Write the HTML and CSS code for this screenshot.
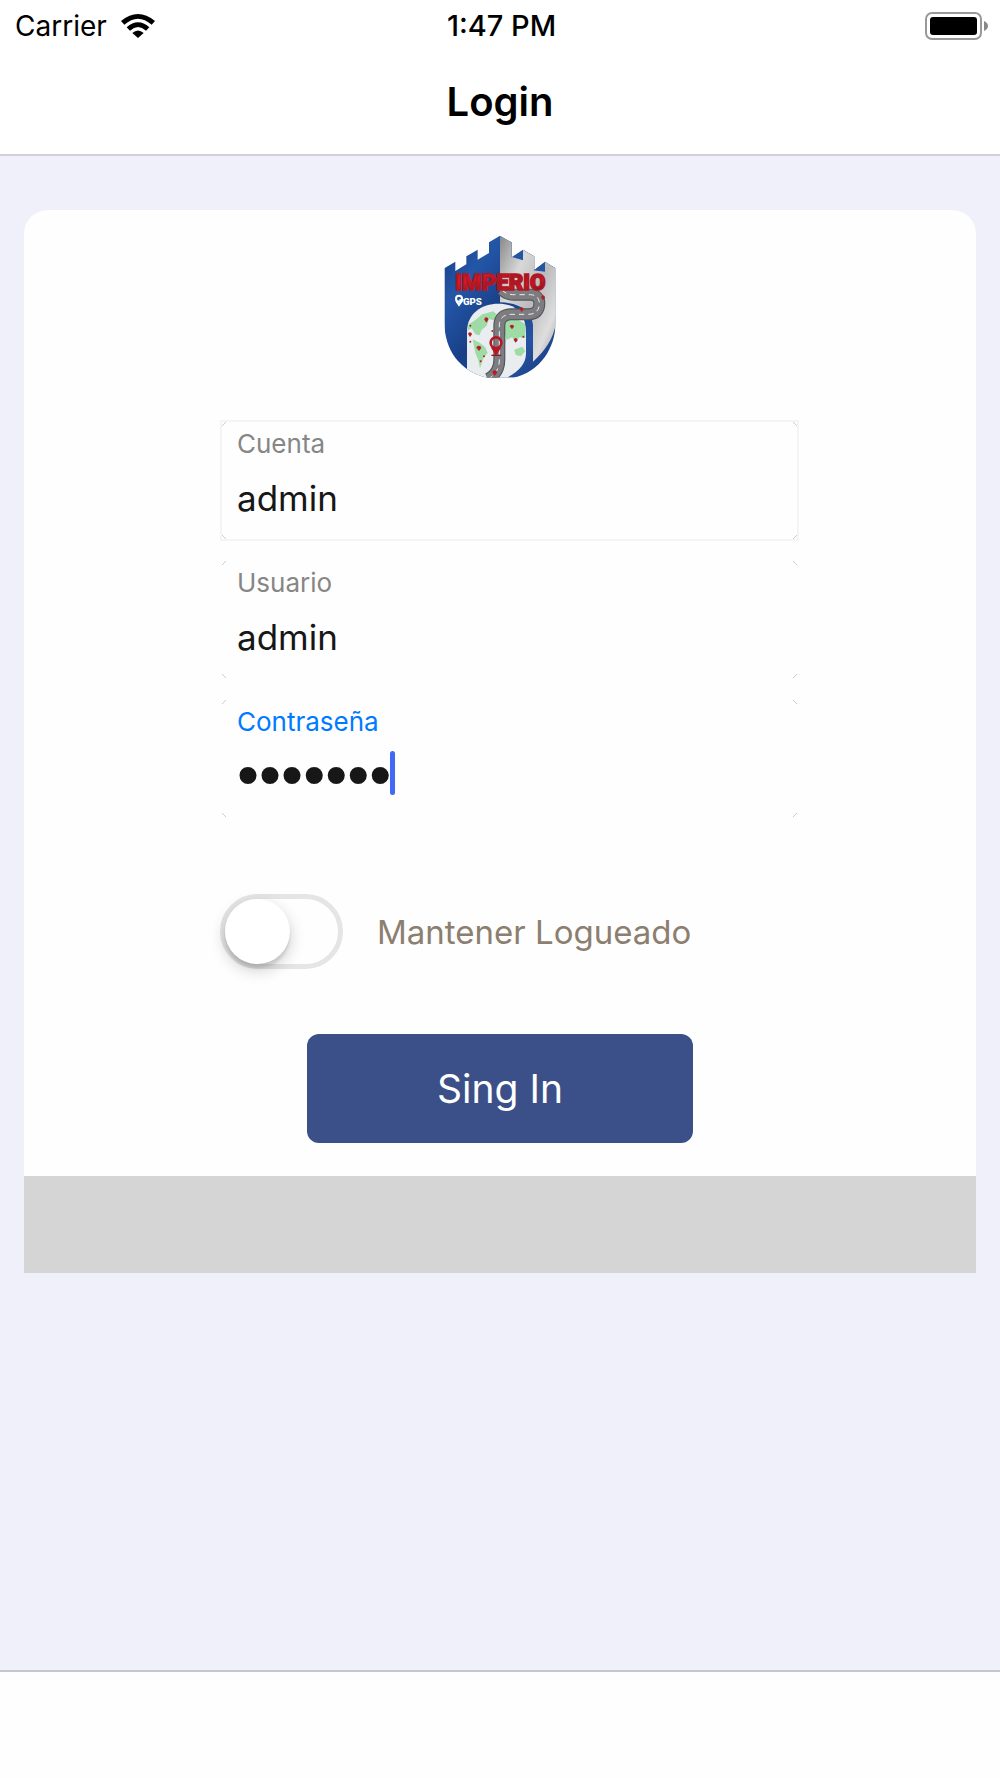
FILE: index.html
```html
<!DOCTYPE html>
<html lang="es">
<head>
<meta charset="utf-8">
<meta name="viewport" content="width=device-width, initial-scale=1">
<title>Login</title>
<link rel="stylesheet" href="styles.css">
</head>
<body>
<header class="top">
  <div class="status">
    <div class="carrier">
      <span>Carrier</span>
      <svg class="wifi" viewBox="0 0 102 72" aria-hidden="true">
        <path d="M0 21Q51 -21 102 21L92 32Q51 -4 10 32Z"/>
        <path d="M17 40Q51 10 85 40L75 50Q51 28 27 50Z"/>
        <path d="M34 57Q51 42 68 57L51 72Z"/>
      </svg>
    </div>
    <span class="time">1:47 PM</span>
    <svg class="battery" viewBox="0 0 63 28" aria-hidden="true">
      <rect x="1" y="1" width="55" height="26" rx="6" fill="none" stroke="#999" stroke-width="2"/>
      <rect x="5" y="5" width="47" height="18" rx="3"/>
      <path d="M59 9Q63 11 63 14Q63 17 59 19Z" fill="#888"/>
    </svg>
  </div>
  <h1 class="title">Login</h1>
</header>

<main class="page">
  <form class="card">
    <svg class="logo" viewBox="0 0 420 495" role="img" aria-label="Imperio GPS">
      <defs>
        <linearGradient id="blue" x1="0" y1="0" x2="1" y2="1">
          <stop offset="0" stop-color="#183b7c"/><stop offset=".25" stop-color="#2456a8"/>
          <stop offset=".5" stop-color="#183f86"/><stop offset=".75" stop-color="#2653a2"/><stop offset="1" stop-color="#17377a"/>
        </linearGradient>
        <linearGradient id="steel" x1="0" y1="0" x2="1" y2="1">
          <stop offset="0" stop-color="#888"/><stop offset=".3" stop-color="#d8d8d8"/>
          <stop offset=".55" stop-color="#bbb"/><stop offset=".8" stop-color="#dedede"/><stop offset="1" stop-color="#999"/>
        </linearGradient>
        <linearGradient id="red" x1="0" y1="0" x2="1" y2="1">
          <stop offset="0" stop-color="#c41624"/><stop offset=".3" stop-color="#df1a26"/>
          <stop offset=".5" stop-color="#a71522"/><stop offset=".7" stop-color="#c51a27"/><stop offset="1" stop-color="#4c1218"/>
        </linearGradient>
        <clipPath id="shield">
          <path d="M43 130L76 110V138L109 118V94L143 74V104L177 84V52L210 32L245 52V97L279 74L313 94V135L345 110L377 130V290C377 370 330 440 250 458H170C90 438 43 375 43 290Z"/>
        </clipPath>
        <clipPath id="arch"><path d="M111 458V320C111 265 155 236 205 236C260 236 288 268 288 325V385Q288 430 230 458Z"/></clipPath>
        <path id="road" d="M216 195Q230 210 254 209H302Q328 211 328 235Q328 268 294 268H241Q209 270 208 300V398Q210 443 174 462"/>
      </defs>
      <g clip-path="url(#shield)">
        <path d="M43 30H377V458H43Z" fill="url(#blue)"/>
        <path d="M210 32L245 52V97L279 74L313 94V135L345 110L377 130V300Q365 360 309 410V300Q300 235 210 232Z" fill="url(#steel)"/>
        <path d="M246 96L279 74V106ZM310 136L345 110V140Z" fill="#2455a3"/>
        <path d="M111 458V320C111 265 155 236 205 236C260 236 288 268 288 325V385Q288 430 230 458Z" fill="#e9edef"/>
        <g clip-path="url(#arch)" fill="#9edba5">
          <path d="M136 285L157 268L190 259L205 273L191 286L177 282L170 302L155 315L148 331L136 328L125 310L113 316L116 298Z"/>
          <path d="M128 343L149 353L166 367L173 384L161 398L150 430L145 405L136 384Z"/>
          <path d="M224 290L246 274L270 288L286 297V340L268 337L257 351L246 337L230 345L222 321Z"/>
          <path d="M188 322L217 315L228 348L214 380L202 370L198 348Z"/>
          <path d="M253 374L277 365L286 379L272 394L257 390Z"/>
        </g>
        <g fill="none" stroke-linejoin="round">
          <use href="#road" stroke="#55565c" stroke-width="36"/>
          <use href="#road" stroke="#7d7d81" stroke-width="29"/>
          <use href="#road" stroke="#eee" stroke-width="3" stroke-dasharray="16 12"/>
        </g>
      </g>
      <text class="brand" x="76" y="195">IMPERIO</text>
      <g fill="none" stroke="#fff" stroke-width="6"><circle cx="87" cy="221" r="9"/><path d="M79 228L87 240L97 226H88"/></g>
      <text class="brand-sub" x="99" y="241">GPS</text>
      <path d="M198 392L182 367L198 372L214 367Z" fill="#b51725"/>
      <circle cx="198" cy="353" r="16" fill="none" stroke="#b51725" stroke-width="8"/>
      <path d="M184 391H214" stroke="#8f1722" stroke-width="4"/>
      <g fill="#b51e29">
        <path d="M169 293L163 284Q163 277 169 277Q176 278 175 284Z"/><path d="M120 336L114 327Q115 322 120 322Q126 323 126 328Z"/>
        <path d="M147 378L139 368Q140 362 147 362Q154 363 154 369Z"/><path d="M246 313L239 304Q240 299 246 299Q253 300 252 305Z"/>
        <path d="M275 261L269 252Q269 247 275 247Q281 248 281 253Z"/><path d="M339 226L333 217Q334 211 339 211Q345 212 345 218Z"/>
        <path d="M257 353L251 345Q252 339 257 339Q263 340 263 346Z"/><path d="M194 453L187 442Q188 436 194 436Q202 437 201 443Z"/>
        <circle cx="121" cy="302" r="3"/><circle cx="121" cy="350" r="3"/><circle cx="187" cy="318" r="3"/><circle cx="152" cy="409" r="3"/><circle cx="280" cy="335" r="3"/><circle cx="162" cy="394" r="3"/>
      </g>
    </svg>

    <div class="fields">
      <div class="field field-outlined">
        <label for="account">Cuenta</label>
        <input id="account" type="text" value="admin">
      </div>
      <div class="field">
        <label for="user">Usuario</label>
        <input id="user" type="text" value="admin">
      </div>
      <div class="field field-active">
        <label for="password">Contraseña</label>
        <input id="password" class="password" type="password" value="1234567">
        <span class="caret"></span>
      </div>
    </div>

    <div class="remember">
      <input id="remember" class="switch" type="checkbox" role="switch">
      <label for="remember">Mantener Logueado</label>
    </div>

    <button class="submit" type="button">Sing In</button>
    <div class="card-footer"></div>
  </form>
</main>
<footer class="tabbar"></footer>
</body>
</html>
```
FILE: styles.css
```css
* {
  box-sizing: border-box;
}

body {
  margin: 0;
  min-height: 100vh;
  display: flex;
  flex-direction: column;
  background: #f0f0fa;
  color: #000;
  font-family: Inter, "Liberation Sans", sans-serif;
}

.top {
  background: #fff;
  border-bottom: 2px solid #d0d0d6;
}

.status {
  display: grid;
  grid-template-columns: 1fr auto 1fr;
  align-items: center;
  height: 50px;
  padding: 0 12px 0 15px;
  font-size: 28px;
  line-height: 52px;
}

.carrier {
  display: flex;
  align-items: center;
  gap: 14px;
}

.wifi {
  width: 34px;
  height: 24px;
}

.time {
  font-size: 29px;
  font-weight: 500;
}

.battery {
  width: 63px;
  height: 28px;
  justify-self: end;
}

.title {
  margin: 0;
  height: 104px;
  font-size: 40px;
  font-weight: 600;
  line-height: 104px;
  text-align: center;
}

.page {
  flex: 1;
  padding: 54px 24px;
}

.card {
  display: flex;
  flex-direction: column;
  padding-top: 15px;
  border-radius: 24px 24px 0 0;
  background: #fefefe;
}

.logo {
  align-self: center;
  width: 140px;
  height: 165px;
}

.brand {
  font: 900 67px Roboto, sans-serif;
  fill: url(#red);
  stroke: #b01722;
  stroke-width: 5px;
}

.brand-sub {
  font: 900 29px Roboto, sans-serif;
  fill: #fff;
}

.fields {
  display: flex;
  flex-direction: column;
  gap: 18px;
  margin: 30px 177px 0 196px;
}

.field {
  position: relative;
  display: flex;
  flex-direction: column;
  height: 121px;
  padding: 4px 15px;
  border: 2px solid transparent;
  background:
    linear-gradient(to bottom right, transparent 40%, #ccc 40% 60%, transparent 60%) left top / 4px 4px,
    linear-gradient(to bottom left, transparent 40%, #ccc 40% 60%, transparent 60%) right top / 4px 4px,
    linear-gradient(to bottom left, transparent 40%, #ccc 40% 60%, transparent 60%) left bottom / 4px 4px,
    linear-gradient(to bottom right, transparent 40%, #ccc 40% 60%, transparent 60%) right bottom / 4px 4px;
  background-repeat: no-repeat;
}

.field-outlined {
  border-color: #f4f4f4;
}

.field label {
  color: #868686;
  font-size: 26px;
  line-height: 36px;
}

.field-active label {
  color: #007aff;
}

.field input {
  width: 100%;
  height: 48px;
  margin: 12px 0 0;
  padding: 0;
  border: 0;
  outline: 0;
  background: none;
  color: #171717;
  font: 35px/48px Inter, "Liberation Sans", sans-serif;
}

.field .password {
  padding-bottom: 4px;
  font: 63px/44px "Liberation Sans", sans-serif;
}

.caret {
  position: absolute;
  top: 51px;
  left: 168px;
  width: 5px;
  height: 44px;
  border-radius: 3px;
  background: #4169f5;
}

.remember {
  display: flex;
  align-items: center;
  gap: 34px;
  margin: 75px 0 0 196px;
  color: #8c7f70;
  font-size: 33px;
  line-height: 44px;
}

.switch {
  appearance: none;
  width: 123px;
  height: 75px;
  margin: 0;
  border: 5px solid #e5e5e5;
  border-radius: 38px;
}

.switch::before {
  content: "";
  display: block;
  width: 65px;
  height: 65px;
  border-radius: 50%;
  background: #fff;
  box-shadow: 0 6px 16px rgba(0, 0, 0, 0.2), 0 4px 3px rgba(0, 0, 0, 0.1);
}

.switch:checked::before {
  margin-left: auto;
}

.submit {
  align-self: center;
  width: 386px;
  max-width: 100%;
  height: 109px;
  margin: 65px 0 33px;
  padding: 0;
  border: 0;
  border-radius: 12px;
  background: #3b5088;
  color: #fff;
  font: 39px/48px Inter, "Liberation Sans", sans-serif;
}

.card-footer {
  height: 97px;
  background: #d5d5d5;
}

.tabbar {
  height: 108px;
  border-top: 2px solid #c6c6d0;
  background: #fefefe;
}
```
